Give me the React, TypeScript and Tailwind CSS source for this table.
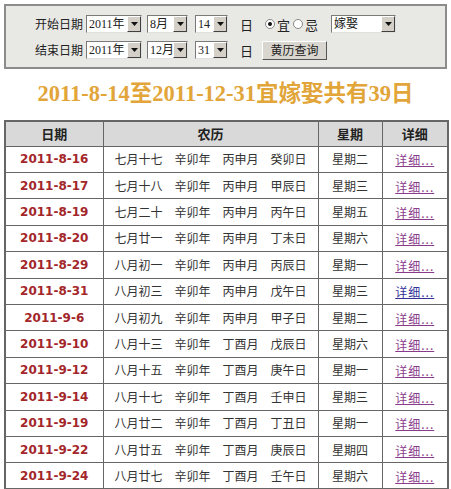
import React from "react"

const ROWS = [
  { date: "2011-8-16", lunar: ["七月十七", "辛卯年", "丙申月", "癸卯日"], week: "星期二" },
  { date: "2011-8-17", lunar: ["七月十八", "辛卯年", "丙申月", "甲辰日"], week: "星期三" },
  { date: "2011-8-19", lunar: ["七月二十", "辛卯年", "丙申月", "丙午日"], week: "星期五" },
  { date: "2011-8-20", lunar: ["七月廿一", "辛卯年", "丙申月", "丁未日"], week: "星期六" },
  { date: "2011-8-29", lunar: ["八月初一", "辛卯年", "丙申月", "丙辰日"], week: "星期一" },
  { date: "2011-8-31", lunar: ["八月初三", "辛卯年", "丙申月", "戊午日"], week: "星期三", fresh: true },
  { date: "2011-9-6", lunar: ["八月初九", "辛卯年", "丙申月", "甲子日"], week: "星期二" },
  { date: "2011-9-10", lunar: ["八月十三", "辛卯年", "丁酉月", "戊辰日"], week: "星期六" },
  { date: "2011-9-12", lunar: ["八月十五", "辛卯年", "丁酉月", "庚午日"], week: "星期一" },
  { date: "2011-9-14", lunar: ["八月十七", "辛卯年", "丁酉月", "壬申日"], week: "星期三" },
  { date: "2011-9-19", lunar: ["八月廿二", "辛卯年", "丁酉月", "丁丑日"], week: "星期一" },
  { date: "2011-9-22", lunar: ["八月廿五", "辛卯年", "丁酉月", "庚辰日"], week: "星期四" },
  { date: "2011-9-24", lunar: ["八月廿七", "辛卯年", "丁酉月", "壬午日"], week: "星期六" },
]

const cjk = "font-['Noto_Sans_CJK_SC',sans-serif]"

// old-school windows style dropdown
function Sel({ value, w }: { value: string; w: string }) {
  return (
    <div className={`flex h-[18px] ${w} border border-t-[#7a7a7a] border-l-[#7a7a7a] border-b-[#e0e0e0] border-r-[#e0e0e0] bg-white`}>
      <div className="flex-1 pl-[2px] text-[12px] leading-[16px] text-[#222] font-['Liberation_Serif','Noto_Sans_CJK_SC',serif] overflow-hidden whitespace-nowrap">
        {value}
      </div>
      <div className="w-[14px] bg-[#d4d0c8] border border-t-white border-l-white border-b-[#404040] border-r-[#404040] flex items-center justify-center">
        <svg width="7" height="4" viewBox="0 0 7 4">
          <path d="M0 0h7L3.5 4z" fill="#111" />
        </svg>
      </div>
    </div>
  )
}

function Radio({ checked }: { checked?: boolean }) {
  return (
    <span className="w-[10px] h-[10px] rounded-full border border-[#888] bg-white flex items-center justify-center">
      {checked && <span className="w-[4px] h-[4px] rounded-full bg-[#111]" />}
    </span>
  )
}

export default function App() {
  return (
    <div className="w-[451px] h-[489px] overflow-hidden bg-white">
      {/* query form */}
      <div className={`mx-[4px] mt-[4px] h-[65px] border-2 border-[#8c8c8c] bg-[#e8e8e5] pl-[29px] pt-[9px] flex flex-col gap-[8px] ${cjk} text-[12px] text-[#222]`}>
        <div className="flex items-center h-[18px]">
          <span className="w-[51px] leading-none">开始日期</span>
          <Sel value="2011年" w="w-[56px]" />
          <span className="w-[5px]" />
          <Sel value="8月" w="w-[41px]" />
          <span className="w-[7px]" />
          <Sel value="14" w="w-[33px]" />
          <span className="ml-[12px] w-[25px] text-[13px] leading-none">日</span>
          <span className="flex items-center gap-[2px]">
            <Radio checked />
            <span className="text-[13px] leading-none">宜</span>
          </span>
          <span className="ml-[3px] flex items-center gap-[2px]">
            <Radio />
            <span className="text-[13px] leading-none">忌</span>
          </span>
          <span className="w-[13px]" />
          <Sel value="嫁娶" w="w-[65px]" />
        </div>
        <div className="flex items-center h-[18px]">
          <span className="w-[51px] leading-none">结束日期</span>
          <Sel value="2011年" w="w-[56px]" />
          <span className="w-[5px]" />
          <Sel value="12月" w="w-[41px]" />
          <span className="w-[7px]" />
          <Sel value="31" w="w-[33px]" />
          <span className="ml-[12px] w-[22px] text-[13px] leading-none">日</span>
          <button className="w-[65px] h-[19px] bg-[#d9d6cf] border border-t-white border-l-white border-b-[#555] border-r-[#555] text-[12px] leading-none text-[#222]">
            黄历查询
          </button>
        </div>
      </div>

      {/* title */}
      <div className="h-[51px] flex items-center justify-center">
        <h1 className="text-[22.5px] font-bold leading-none text-[#e2a53a] font-['Liberation_Serif','Noto_Sans_CJK_SC',serif]">
          2011-8-14至2011-12-31宜嫁娶共有39日
        </h1>
      </div>

      {/* result table */}
      <table className="mx-[4px] w-[443px] border-collapse border-2 border-[#666] table-fixed">
        <colgroup>
          <col className="w-[98px]" />
          <col className="w-[215px]" />
          <col className="w-[64px]" />
          <col className="w-[66px]" />
        </colgroup>
        <thead>
          <tr className={`h-[25px] bg-[#d9d9d9] ${cjk} text-[13px] font-bold text-[#222]`}>
            <th className="border border-[#666]">日期</th>
            <th className="border border-[#666]">农历</th>
            <th className="border border-[#666]">星期</th>
            <th className="border border-[#666]">详细</th>
          </tr>
        </thead>
        <tbody>
          {ROWS.map((r) => (
            <tr key={r.date} className="h-[26.42px]">
              <td className="border border-[#666] text-center text-[12px] font-bold text-[#a3262a] font-['DejaVu_Sans',sans-serif]">
                {r.date}
              </td>
              <td className={`border border-[#666] text-center text-[12px] text-[#333] ${cjk}`}>
                {r.lunar.join("　")}
              </td>
              <td className={`border border-[#666] text-center text-[12px] text-[#333] ${cjk}`}>{r.week}</td>
              <td className="border border-[#666] text-center">
                <a
                  href="#"
                  className={`text-[12px] underline tracking-[1px] ${cjk} ${r.fresh ? "text-[#33339a]" : "text-[#8a3c8c]"}`}
                >
                  详细...
                </a>
              </td>
            </tr>
          ))}
        </tbody>
      </table>
    </div>
  )
}
